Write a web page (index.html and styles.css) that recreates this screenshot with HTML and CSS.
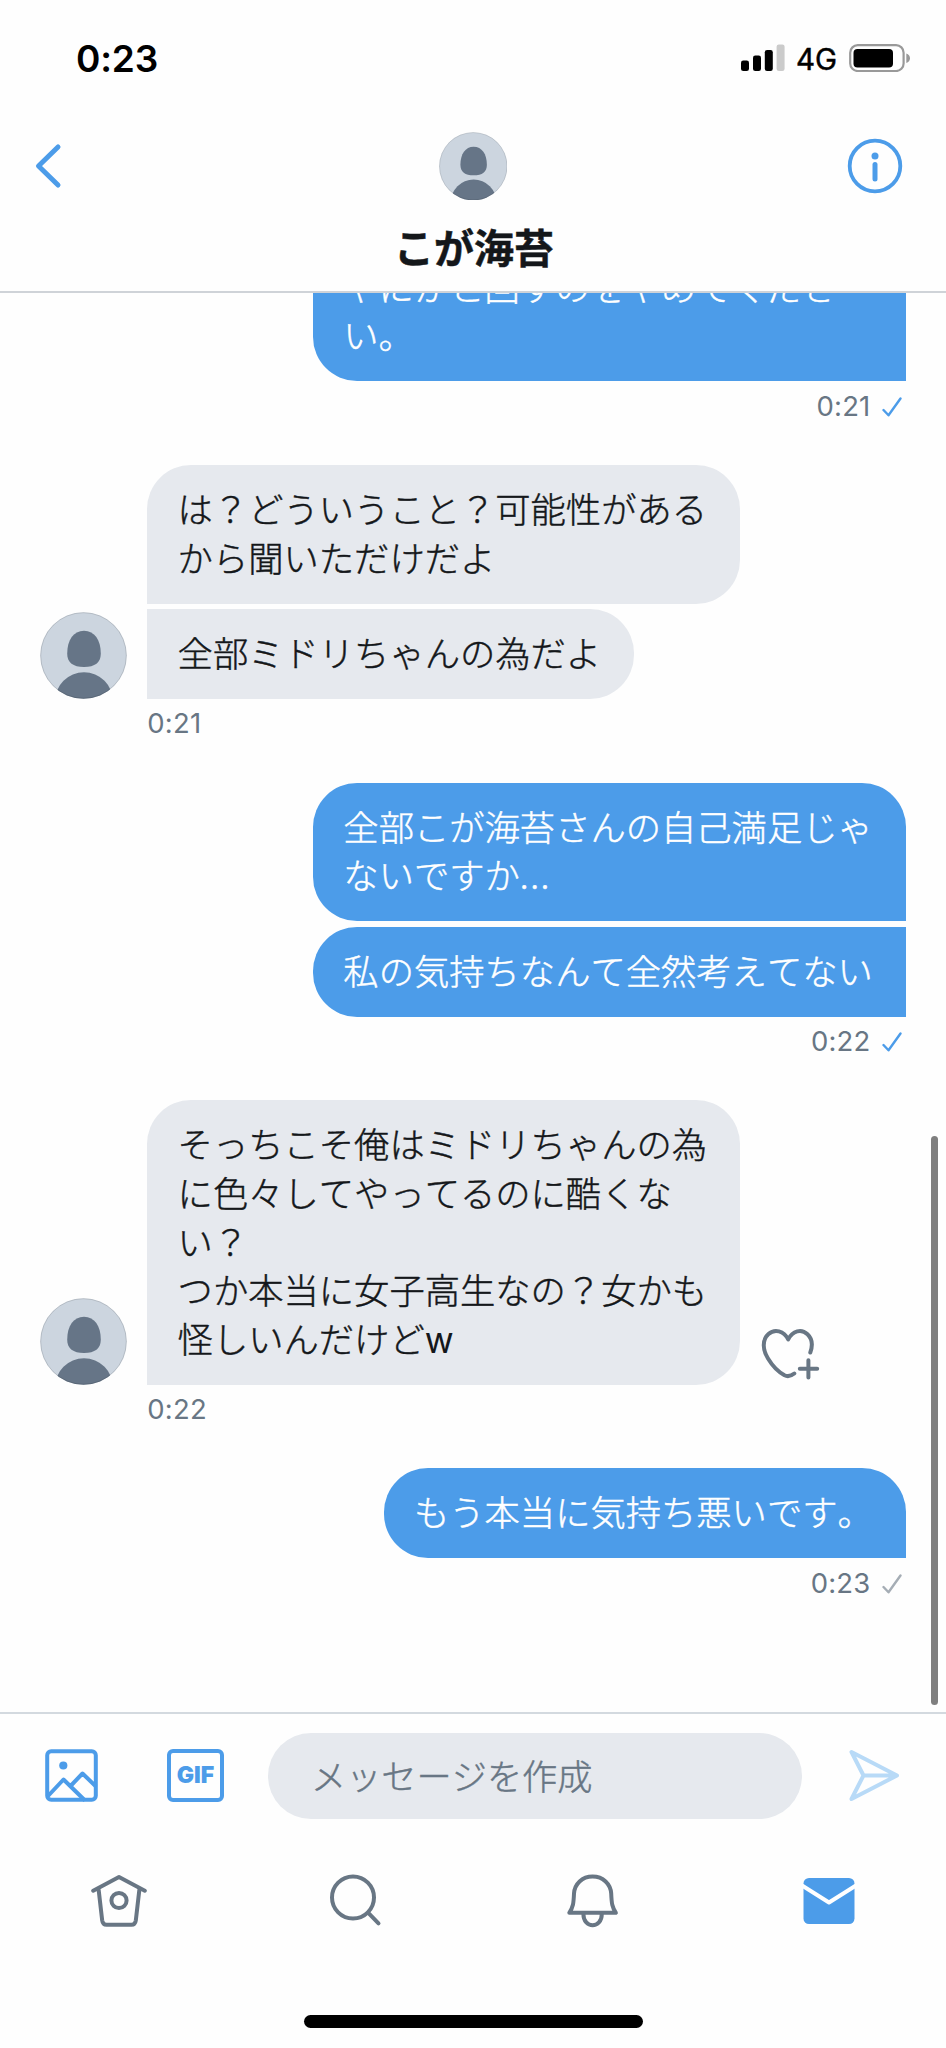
FILE: index.html
```html
<!DOCTYPE html>
<html lang="ja">
<head>
<meta charset="utf-8">
<title>こが海苔</title>
<link rel="stylesheet" href="styles.css">
</head>
<body>
<svg class="defs" width="0" height="0" aria-hidden="true">
  <defs>
    <clipPath id="round"><circle cx="43.5" cy="43.5" r="43.3"/></clipPath>
    <symbol id="avatar" viewBox="0 0 87 87">
      <circle cx="43.5" cy="43.5" r="43.3" fill="#ccd5df"/>
      <path d="M44 18.7C54.5 18.7 60.8 28 60.8 41.5C60.8 50.5 55 55 44 55C33 55 27.2 50.5 27.2 41.5C27.2 28 33.5 18.7 44 18.7Z" fill="#667587"/>
      <circle cx="44" cy="89.3" r="29" fill="#667587" clip-path="url(#round)"/>
      <circle cx="43.5" cy="43.5" r="42.8" fill="none" stroke="#000" stroke-opacity=".12"/>
    </symbol>
    <symbol id="check" viewBox="0 0 20 20">
      <path d="M1.5 13L6.5 18.3L18.5 1.5" fill="none" stroke="currentColor" stroke-width="2.4" stroke-linecap="round" stroke-linejoin="round"/>
    </symbol>
  </defs>
</svg>
<div class="screen">
  <div class="status">
    <span class="clock">0:23</span>
    <div class="status-right">
      <svg class="signal" viewBox="0 0 44 28">
        <rect x="0" y="16.5" width="8" height="10.5" rx="2.3"/>
        <rect x="12" y="11.5" width="8" height="15.5" rx="2.3"/>
        <rect x="23.8" y="6" width="8" height="21" rx="2.3"/>
        <rect x="35.6" y=".5" width="8" height="26.5" rx="2.3" fill="#cbcbcb"/>
      </svg>
      <span class="network">4G</span>
      <svg class="battery" viewBox="0 0 62 28">
        <rect x="1.2" y="1.2" width="53.4" height="25.8" rx="7.5" fill="none" stroke="#999" stroke-width="2.2"/>
        <rect x="4.5" y="5" width="39.5" height="18.5" rx="4"/>
        <path d="M57.3 9.5C59.6 10.3 61 12 61 14.2C61 16.5 59.6 18.2 57.3 19Z" fill="#999"/>
      </svg>
    </div>
  </div>
  <header class="header">
    <svg class="back" viewBox="0 0 30 48"><path d="M24 5L4.5 24L24 43" /></svg>
    <svg class="avatar-small"><use href="#avatar"/></svg>
    <svg class="info" viewBox="0 0 56 56">
      <circle cx="28" cy="28" r="25.3" fill="none" stroke="#4c9ce9" stroke-width="3.8"/>
      <circle cx="28" cy="18" r="3.5" fill="#4c9ce9"/>
      <path d="M28 26.5V41" stroke="#4c9ce9" stroke-width="5" stroke-linecap="round"/>
    </svg>
    <h1 class="title">こが海苔</h1>
  </header>

  <main class="thread">
    <section class="group mine">
      <div class="bubble first">やにかと回すのをやめてくださ<br>い。</div>
      <div class="meta">0:21<svg class="check"><use href="#check"/></svg></div>
    </section>
    <section class="group theirs">
      <svg class="avatar"><use href="#avatar"/></svg>
      <div class="bubbles">
        <div class="bubble">は？どういうこと？可能性がある<br>から聞いただけだよ</div>
        <div class="bubble next">全部ミドリちゃんの為だよ</div>
      </div>
      <div class="meta">0:21</div>
    </section>
    <section class="group mine">
      <div class="bubble">全部こが海苔さんの自己満足じゃ<br>ないですか<span class="dots">...</span></div>
      <div class="bubble next">私の気持ちなんて全然考えてない</div>
      <div class="meta">0:22<svg class="check"><use href="#check"/></svg></div>
    </section>
    <section class="group theirs">
      <svg class="avatar"><use href="#avatar"/></svg>
      <div class="bubbles">
        <div class="bubble">そっちこそ俺はミドリちゃんの為<br>に色々してやってるのに酷くな<br>い？<br>つか本当に女子高生なの？女かも<br>怪しいんだけど<span class="latin">w</span></div>
      </div>
      <svg class="react" viewBox="0 0 60 52">
        <path d="M49.3 24.5C51.8 17.5 51 10.5 46.5 6.2C40.5.5 31.5 2.5 27.2 11.5C23 2.5 13.5.5 7.5 6C1 12 1.5 21.5 7 30.5C11.5 38 18.5 44.5 23.5 47.3C27 49 29.5 48.5 33.3 45.5"/>
        <path d="M38.8 40.8H56.2M47.4 32.2V49.5"/>
      </svg>
      <div class="meta">0:22</div>
    </section>
    <section class="group mine last">
      <div class="bubble">もう本当に気持ち悪いです。</div>
      <div class="meta">0:23<svg class="check pending"><use href="#check"/></svg></div>
    </section>
    <div class="scrollbar"></div>
  </main>

  <div class="composer">
    <svg class="photo" viewBox="0 0 53 53" fill="none" stroke="#4c9ce9" stroke-width="4">
      <rect x="2.2" y="2.2" width="48.6" height="48.6" rx="4"/>
      <circle cx="18.3" cy="16.5" r="4.1" fill="#4c9ce9" stroke="none"/>
      <path d="M3 47L18.5 30.5L40 51.5M26 36.5L37.5 24.5L51 37.5" stroke-linejoin="round"/>
    </svg>
    <div class="gif">GIF</div>
    <div class="field">メッセージを作成</div>
    <svg class="send" viewBox="0 0 52 53"><path d="M3.5 3L49 26.5L3.5 50L15.5 26.5ZM15.5 26.5H48"/></svg>
  </div>

  <nav class="tabs">
    <svg class="tab" viewBox="0 0 56 54">
      <path d="M2.2 16.7L28 3L53.8 16.7M7.5 14.5L11.2 46.5Q11.8 50.8 15.5 50.8H40.5Q44.2 50.8 44.8 46.5L48.5 14.5"/>
      <circle cx="28" cy="26.5" r="7.6"/>
    </svg>
    <svg class="tab" viewBox="0 0 56 54">
      <circle cx="26" cy="23.5" r="21"/><path d="M41.3 38.8L51.5 49.3"/>
    </svg>
    <svg class="tab" viewBox="0 0 56 54">
      <path transform="translate(.6 0)" d="M28 2.5C38.5 2.5 46 10 46.6 19.5C47 29.5 47.5 33 51.3 38.8H4.7C8.5 33 9 29.5 9.4 19.5C10 10 17.5 2.5 28 2.5ZM18.8 40C18.8 55 37.2 55 37.2 40"/>
    </svg>
    <svg class="tab" viewBox="0 0 56 54">
      <rect x="2.5" y="4" width="51" height="46" rx="5.5" fill="#4c9ce9" stroke="none"/>
      <path d="M1 11.5L28 28.5L55 11.5" stroke="#fff"/>
    </svg>
  </nav>
  <div class="home-indicator"></div>
</div>
</body>
</html>
```
FILE: styles.css
```css
* { box-sizing: border-box; }

body {
  margin: 0;
  background: #fefefe;
  color: #14171a;
  font-family: Inter, "Noto Sans CJK JP", sans-serif;
}

svg { display: block; flex: none; }

.defs { position: absolute; }

.screen {
  width: 946px;
  height: 2048px;
  display: flex;
  flex-direction: column;
  overflow: hidden;
}

/* Status bar */
.status {
  height: 116px;
  flex: none;
  padding: 0 35px 0 76px;
  display: flex;
  align-items: center;
  justify-content: space-between;
  color: #000;
}
.clock { font-size: 37px; font-weight: 600; letter-spacing: -0.2px; }
.status-right { display: flex; align-items: center; }
.signal { width: 44px; height: 28px; }
.network { margin: 1px 12px 0 11px; font-size: 29.5px; line-height: 30px; font-weight: 400; -webkit-text-stroke: 0.5px #000; }
.battery { width: 62px; height: 28px; }

/* Conversation header */
.header {
  height: 177px;
  flex: none;
  padding: 0 43px 0 34px;
  display: grid;
  grid-template-columns: 56px 1fr 56px;
  grid-template-rows: 100px 1fr;
  align-items: center;
  border-bottom: 2px solid #cfd3d8;
}
.back { width: 30px; height: 48px; fill: none; stroke: #4c9ce9; stroke-width: 5; stroke-linecap: round; stroke-linejoin: round; }
.avatar-small { width: 68.5px; height: 68.5px; margin-left: 348.5px; }
.info { width: 56px; height: 56px; }
.title {
  grid-column: 1 / -1;
  margin: 0 0 15px 11px;
  align-self: end;
  text-align: center;
  font-family: "Noto Sans CJK JP", sans-serif;
  font-size: 40px;
  line-height: 60px;
  font-weight: 700;
  font-kerning: none;
  -webkit-text-stroke: 0.5px currentColor;
}

/* Message thread, anchored to its newest message */
.thread {
  position: relative;
  flex: none;
  height: 1419px;
  padding: 0 40.5px 70px 40px;
  display: flex;
  flex-direction: column;
  justify-content: flex-end;
  overflow: hidden;
}
.group { flex: none; }
.mine { display: flex; flex-direction: column; align-items: flex-end; }
.theirs {
  display: grid;
  grid-template-columns: 107.3px auto 1fr;
  align-items: end;
}
.bubbles { display: flex; flex-direction: column; align-items: flex-start; }
.bubble {
  padding: 19.1px 32.7px 22.3px 30.3px;
  font-size: 35.3px;
  line-height: 48.6px;
  font-family: "Noto Sans CJK JP", sans-serif;
  font-weight: 300;
  font-kerning: none;
  -webkit-text-stroke: 0.45px currentColor;
  white-space: nowrap;
}
.mine .bubble { background: #4c9ce9; color: #fff; border-radius: 44px 44px 0 44px; }
.mine .first { width: 592.5px; }
.mine .bubble.next { margin-top: 5.4px; border-radius: 44px 0 0 44px; }
.theirs .bubble { background: #e6e9ee; border-radius: 44px 44px 44px 0; }
.theirs .bubble.next { margin-top: 5.4px; border-radius: 0 44px 44px 0; }
.dots { letter-spacing: 1.5px; }
.latin { font-family: Inter, sans-serif; font-weight: 400; line-height: 1; -webkit-text-stroke: 0; }
.avatar { width: 87px; height: 87px; }
.meta {
  height: 83.7px;
  padding-top: 7.5px;
  display: flex;
  font-size: 27.5px;
  line-height: 34px;
  letter-spacing: 0.2px;
  color: #687684;
}
.theirs .meta { grid-column: 2; }
.mine .meta { padding-right: 4px; }
.check { width: 20px; height: 20px; margin: 8px 0 0 11px; color: #4c9ce9; }
.check.pending { color: #a5adb5; }
.react {
  width: 60px;
  height: 52px;
  margin: 0 0 5px 21px;
  fill: none;
  stroke: #687684;
  stroke-width: 4;
  stroke-linecap: round;
  stroke-linejoin: round;
}
.scrollbar {
  position: absolute;
  top: 843px;
  right: 8px;
  width: 7px;
  height: 569px;
  border-radius: 4px;
  background: #7f7f7f;
}

/* Message composer */
.composer {
  flex: none;
  height: 126px;
  padding: 0 46px 1px 45px;
  display: flex;
  align-items: center;
  border-top: 2px solid #d3d9df;
}
.photo { width: 53px; height: 53px; }
.gif {
  width: 57px;
  height: 53px;
  margin-left: 69px;
  border: 4px solid #4c9ce9;
  border-radius: 6px;
  color: #4c9ce9;
  font-size: 23px;
  line-height: 45px;
  font-weight: 900;
  text-align: center;
}
.field {
  width: 534px;
  height: 86px;
  margin-left: 44px;
  padding-left: 43px;
  border-radius: 43px;
  background: #e6e9ee;
  color: #687684;
  font-family: "Noto Sans CJK JP", sans-serif;
  font-size: 35.2px;
  font-weight: 300;
  font-kerning: none;
  -webkit-text-stroke: 0.45px currentColor;
  line-height: 83px;
}
.send {
  width: 52px;
  height: 53px;
  margin-left: 46px;
  fill: none;
  stroke: #b8daf7;
  stroke-width: 4;
  stroke-linejoin: round;
}

/* Tab bar */
.tabs {
  flex: none;
  height: 177px;
  padding: 35.5px 89px 0 90.5px;
  display: flex;
  justify-content: space-between;
}
.tab {
  width: 56px;
  height: 54px;
  fill: none;
  stroke: #687684;
  stroke-width: 4;
  stroke-linecap: round;
  stroke-linejoin: round;
}
.home-indicator {
  flex: none;
  width: 339px;
  height: 13px;
  margin-left: 304px;
  border-radius: 7px;
  background: #000;
}
```
